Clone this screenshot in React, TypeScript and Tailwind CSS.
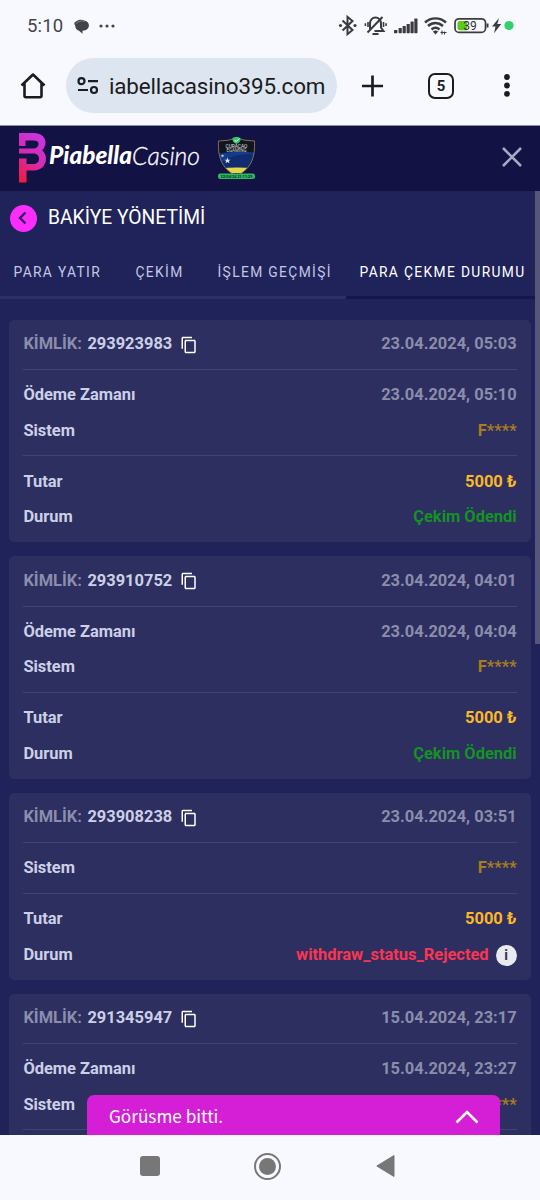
import React from 'react'
import { clsx } from 'clsx'
import { MdContentCopy } from 'react-icons/md'

type Withdrawal = {
  id: string
  date: string
  paidAt?: string
  status?: 'paid' | 'rejected'
}

const withdrawals: Withdrawal[] = [
  { id: '293923983', date: '23.04.2024, 05:03', paidAt: '23.04.2024, 05:10', status: 'paid' },
  { id: '293910752', date: '23.04.2024, 04:01', paidAt: '23.04.2024, 04:04', status: 'paid' },
  { id: '293908238', date: '23.04.2024, 03:51', status: 'rejected' },
  { id: '291345947', date: '15.04.2024, 23:17', paidAt: '15.04.2024, 23:27' },
]

function StatusIcons() {
  return (
    <svg width="180" height="30" viewBox="336 11 180 30" fill="none" stroke="#3b3b40" strokeWidth="2">
      {/* Bluetooth */}
      <path d="M342.500 20.500l10 9.500-5 4.200V16.800l5 4.200-10 9.500" />
      <circle cx="340.500" cy="25.500" r="1.600" fill="#3b3b40" stroke="none" />
      <circle cx="355" cy="25.500" r="1.600" fill="#3b3b40" stroke="none" />
      {/* Muted bell */}
      <path d="M370 30.500v-7c0-3.500 2.500-6 5.500-6s5.500 2.500 5.500 6v4l2.500 3.500h-9M367.500 32.500l15-15.500M372.500 34h6" />
      <path d="M368 22v5M365.400 23.300v2.700M383.500 22v5M386 23.300v2.700" strokeWidth="1.600" />
      {/* Signal */}
      <g fill="#3b3b40" stroke="none">
        <rect x="394" y="30" width="3.400" height="3.200" rx=".6" />
        <rect x="398.600" y="28" width="3.200" height="5.200" rx=".6" />
        <rect x="402.600" y="26" width="3.200" height="7.200" rx=".6" />
        <rect x="406.600" y="24" width="3.200" height="9.200" rx=".6" />
        <rect x="410.500" y="21.500" width="3.200" height="11.700" rx=".6" />
        <rect x="414.300" y="18.500" width="3.200" height="14.700" rx=".6" />
      </g>
      {/* Wi-Fi */}
      <path d="M425 22.500c6-5.500 15-5.500 21 0M428 26c4.500-4 10.500-4 15 0M431.500 29.500c2.500-2.200 5.500-2.200 8 0" strokeWidth="2.400" />
      <path d="M432.800 31.500l2.700-1.200 2.700 1.200-2.700 3z" fill="#3b3b40" stroke="none" />
      <path d="M442 30.500v4M444.500 31.500v3M440.500 32.500h6" strokeWidth="1.100" />
      {/* Battery */}
      <rect x="455" y="18.800" width="30.500" height="13.600" rx="4" strokeWidth="1.700" />
      <path d="M459.500 20.900h7.500v9.400h-7.500a2 2 0 0 1-2-2v-5.400a2 2 0 0 1 2-2z" fill="#5fc917" stroke="none" />
      <path d="M487.500 23.500v4" />
      <text x="463.300" y="29.900" fontSize="12" fontFamily="Roboto, sans-serif" fill="#333" stroke="none">39</text>
      <path d="M499 18l-7 8.500h3.500l-1.500 6.800 7.300-9.300h-4l1.700-6z" fill="#3b3b40" stroke="none" />
      <circle cx="509" cy="25.500" r="4.600" fill="#32d068" stroke="none" />
    </svg>
  )
}

function StatusBar() {
  return (
    <div className="flex h-[51px] items-center justify-between pl-[27px] pr-6 text-[#444448]">
      <div className="flex items-center pt-0.5">
        <span className="w-[36px] text-[18.500px] tracking-[0.2px]">5:10</span>
        <svg className="ml-[11px]" width="16" height="16" viewBox="0 0 16 16" fill="#424247">
          <path d="M2 2.500C4 .6 8 .2 11 1.700c4 1 5 5.300 2.800 7.900-1.300 1.600-3.300 2.200-5.300 2.200v3l-3.500-3C2.500 11 1 9 1.300 6.800L.4 5.200C.1 4.100.8 3 2 2.500z" />
          <path d="M1.800 4.800C4 2 8 1.300 11 2.300" stroke="#aaaab0" strokeWidth=".6" fill="none" />
        </svg>
        <svg className="-mt-[2px] ml-[8px]" width="18" height="6" viewBox="0 0 18 6" fill="#444448">
          <circle cx="3" cy="3" r="1.600" />
          <circle cx="9" cy="3" r="1.600" />
          <circle cx="15" cy="3" r="1.600" />
        </svg>
      </div>
      <StatusIcons />
    </div>
  )
}

function BrowserBar() {
  return (
    <div className="flex h-[75px] items-start border-b border-[#8990a5] pt-[7px] text-[#1b1c22]">
      <svg className="ml-5 mt-[14px]" width="26" height="28" viewBox="0 0 26 28" fill="none" stroke="currentColor" strokeWidth="2.600" strokeLinejoin="round">
        <path d="M1.500 13.500L13 2.500l11.500 11M4.500 11.500v12.300q0 1.400 1.400 1.400h14.200q1.400 0 1.400-1.400V11.500" />
      </svg>
      <div className="ml-5 flex h-[55px] w-[271px] items-center overflow-hidden rounded-full bg-[#dde5f0] pl-[11px]">
        <svg width="22" height="18" viewBox="0 0 22 18" fill="none" stroke="currentColor" strokeWidth="2.200">
          <circle cx="4.500" cy="4.200" r="3" />
          <circle cx="17" cy="13" r="3" />
          <path d="M11 4.200h10M1 13h10" />
        </svg>
        <span className="ml-[10px] whitespace-nowrap pt-[3px] text-[22.400px] tracking-[-0.130px]">iabellacasino395.com</span>
      </div>
      <svg className="ml-[24px] mt-[16px]" width="23" height="24" viewBox="0 0 24 24" stroke="currentColor" strokeWidth="2.800">
        <path d="M12 1v22M1 12h22" />
      </svg>
      <div className="ml-[44px] mt-[15px] flex h-[26px] w-[26px] items-center justify-center rounded-[7px] border-[2.500px] border-[#1b1c22] text-[15px] font-bold leading-none">
        5
      </div>
      <svg className="ml-[49px] mt-[15px]" width="8" height="26" viewBox="0 0 8 26" fill="currentColor">
        <circle cx="4" cy="4" r="2.900" />
        <circle cx="4" cy="12.500" r="2.900" />
        <circle cx="4" cy="20.800" r="2.900" />
      </svg>
    </div>
  )
}

function Logo() {
  return (
    <svg className="overflow-visible" width="190" height="52" viewBox="14 132.500 190 52">
      <defs>
        <linearGradient id="logo" x1="0.700" y1="0" x2="0.300" y2="1">
          <stop offset="0" stopColor="#c835e0" />
          <stop offset=".5" stopColor="#d52bb5" />
          <stop offset="1" stopColor="#ef1c48" />
        </linearGradient>
      </defs>
      <path
        fill="url(#logo)"
        d="M19 132.500h15c7 0 11.500 4 11.500 9.500 0 3.500-1.500 6-3.500 7.700 2.500 2 4 5 4 8.300 0 7-5 12-12 12h-7.500v12H19v-24h7.500v5.500H33c3.500 0 6-2 6-5.300s-2.500-5.200-6-5.200H19v-5h14.500c3 0 5-1.800 5-4.500s-2-3.500-5-3.500h-8v5.500H19z"
      />
      <path d="M19 154.600h14.500" stroke="#121245" strokeWidth="1.300" />
      <g fill="#fff" fontFamily="Lato, sans-serif" fontStyle="italic">
        <text x="49" y="163.500" fontSize="25" fontWeight="900" textLength="83" lengthAdjust="spacingAndGlyphs">Piabella</text>
        <text x="132" y="164" fontSize="25.500" fontWeight="300" stroke="#fff" strokeWidth=".3" textLength="68" lengthAdjust="spacingAndGlyphs">Casino</text>
      </g>
    </svg>
  )
}

function LicenseBadge() {
  return (
    <svg width="40" height="44" viewBox="217 136 40 44">
      <defs>
        <clipPath id="shield">
          <path d="M218.500 140q10 0 18-3 8 3 18 3c.6 15-2 27-18 35-16-8-18.600-20-18-35z" />
        </clipPath>
      </defs>
      <g clipPath="url(#shield)">
        <path d="M217 136h40v44h-40z" fill="#11161e" />
        <path d="M217 153q20-4 40-1v15h-40z" fill="#153b8b" />
        <path d="M217 164q20-14 40-10v13h-40z" fill="#102b70" />
        <path d="M217 168q20-3 40 0v4h-40z" fill="#e6d44b" />
      </g>
      <path d="M218.500 140q10 0 18-3 8 3 18 3c.6 15-2 27-18 35-16-8-18.600-20-18-35z" fill="none" stroke="#8b7960" strokeWidth=".9" />
      <path d="M232.500 137l4-1.500 4 1.500c.5 3-1 5-4 6-3-1-4.500-3-4-6z" fill="#31c66b" />
      <path d="M234.500 139l1.700 1.700 3-3.200" stroke="#fff" fill="none" />
      <path d="M227.500 156.500l.8 2.200h2.300l-1.800 1.400.7 2.200-2-1.300-2 1.300.7-2.200-1.800-1.400h2.300zM222.500 153l.4 1.200h1.300l-1 .8.400 1.200-1.100-.7-1.100.7.400-1.200-1-.8h1.300z" fill="#dce4f8" />
      <g fontFamily="Roboto, sans-serif" textAnchor="middle">
        <text x="236.500" y="147.200" fontSize="4.800" fill="#e0e0e0">CURAÇAO</text>
        <text x="236.500" y="151.300" fontSize="4.500" fill="#d5d5d5">EGAMING</text>
        <rect x="218" y="172.500" width="37" height="5.500" rx="2.200" fill="#2dbb62" />
        <text x="236.500" y="177" fontSize="4.300" fontWeight="700" fill="#123b2a" textLength="32">22/04/24 21:11:29</text>
      </g>
    </svg>
  )
}

function SiteHeader() {
  return (
    <header className="flex h-[65px] items-center bg-[#121245] pl-[14px]">
      <Logo />
      <div className="ml-[13px]">
        <LicenseBadge />
      </div>
      <svg className="mb-[3px] ml-auto mr-[18px]" width="20" height="20" viewBox="0 0 20 20" stroke="#a9abc6" strokeWidth="2.600">
        <path d="M1 1l18 18M19 1L1 19" />
      </svg>
    </header>
  )
}

function Tabs() {
  return (
    <nav className="flex h-[55px] whitespace-nowrap text-[13.800px] tracking-[1.360px] text-[#c4c6e4]">
      <span className="flex w-[122px] items-center border-b-[3px] border-[#2c2f62] pl-[13.500px] pt-1">PARA YATIR</span>
      <span className="flex w-[82px] items-center border-b-[3px] border-[#2c2f62] pl-[13.500px] pt-1">ÇEKİM</span>
      <span className="flex w-[142px] items-center border-b-[3px] border-[#2c2f62] pl-[13.500px] pt-1">İŞLEM GEÇMİŞİ</span>
      <span className="flex w-[194px] items-center border-b-[3px] border-[#15154a] pl-[13.500px] pt-1 text-white">PARA ÇEKME DURUMU</span>
    </nav>
  )
}

function Row({ label, className, children }: { label: string; className?: string; children: React.ReactNode }) {
  return (
    <div className="flex h-[35.500px] items-center justify-between pt-0.5">
      <span>{label}</span>
      <span className={clsx('flex items-center', className)}>{children}</span>
    </div>
  )
}

function WithdrawalCard({ item }: { item: Withdrawal }) {
  return (
    <article className="min-h-[150px] shrink-0 rounded-[5px] bg-[#2c2f60] px-[14px] text-[16.450px] font-bold text-[#cdcfe7]">
      <div className="flex h-[50.500px] items-center justify-between border-b border-[#41446f] pt-px">
        <span className="flex items-center">
          <span className="w-[64px] text-[#8b8dac]">KİMLİK:</span>
          <span className="w-[86px]">{item.id}</span>
          <MdContentCopy className="ml-[7px] h-[18px] w-[18px] text-white" />
        </span>
        <span className="text-[#8b8dac]">{item.date}</span>
      </div>
      <div className={clsx('flex flex-col justify-center border-b border-[#41446f]', item.paidAt ? 'h-[86px]' : 'h-[50.500px]')}>
        {item.paidAt && (
          <Row label="Ödeme Zamanı" className="text-[#8b8dac]">
            {item.paidAt}
          </Row>
        )}
        <Row label="Sistem" className="text-[#a87d20]">
          F****
        </Row>
      </div>
      {item.status && (
        <div className="flex h-[86px] flex-col justify-center">
          <Row label="Tutar" className="text-[#fcb827]">
            5000 ₺
          </Row>
          {item.status === 'rejected' ? (
            <Row label="Durum" className="text-[#fb3551]">
              withdraw_status_Rejected
              <span className="ml-[7px] flex h-[21px] w-[21px] items-center justify-center rounded-full bg-[#e9eaf0] text-[14px] text-[#303255]">i</span>
            </Row>
          ) : (
            <Row label="Durum" className="text-[#159224]">
              Çekim Ödendi
            </Row>
          )}
        </div>
      )}
    </article>
  )
}

function ChatBar() {
  return (
    <div className="absolute bottom-0 left-[87px] flex h-10 w-[413px] items-center justify-between rounded-t-[7px] bg-[#d51fd6] pl-[22px] pr-[21px] text-white">
      <span className="pt-0.5 font-['Noto_Sans_CJK_SC','Noto_Sans',sans-serif] text-[17.200px] leading-none">Görüsme bitti.</span>
      <svg className="mt-[3px]" width="24" height="14" viewBox="0 0 24 14" fill="none" stroke="currentColor" strokeWidth="2.600">
        <path d="M1.500 12.500L12 2l10.500 10.500" />
      </svg>
    </div>
  )
}

function NavigationBar() {
  return (
    <div className="flex h-[65px] items-center bg-[#f8f9ff] pb-[3px] pl-[140px]">
      <div className="h-5 w-5 rounded-[3px] bg-[#777]" />
      <div className="ml-[94px] flex h-[27px] w-[27px] items-center justify-center rounded-full border-2 border-[#777]">
        <div className="h-[17px] w-[17px] rounded-full bg-[#777]" />
      </div>
      <svg className="ml-[95px]" width="20" height="24" viewBox="0 0 20 24" fill="#777" stroke="#777" strokeLinejoin="round">
        <path d="M.8 12L18 1.500v21z" />
      </svg>
    </div>
  )
}

export default function App() {
  return (
    <div className="flex h-[1200px] w-[540px] flex-col overflow-hidden bg-[#f8f9ff] font-[Roboto,sans-serif]">
      <StatusBar />
      <BrowserBar />
      <main className="relative flex min-h-0 flex-1 flex-col overflow-hidden bg-[#20235a]">
        <SiteHeader />
        <div className="flex h-[53px] items-center pl-[9.500px] pt-px">
          <span className="flex h-[27px] w-[27px] items-center justify-center rounded-full bg-[#fc2cfc]">
            <svg width="10" height="14" viewBox="0 0 10 14" fill="none" stroke="#29205c" strokeWidth="2.400">
              <path d="M7.500 1.500L2 7l5.500 5.500" />
            </svg>
          </span>
          <h1 className="ml-[11.500px] text-[19.300px] text-white">BAKİYE YÖNETİMİ</h1>
        </div>
        <Tabs />
        <div className="flex min-h-0 flex-1 flex-col gap-[14px] overflow-hidden px-[9.400px] pt-[20.500px]">
          {withdrawals.map((item) => (
            <WithdrawalCard key={item.id} item={item} />
          ))}
        </div>
        <div className="absolute right-0 top-[65px] h-[453px] w-[5px] bg-[#55567a]" />
        <ChatBar />
      </main>
      <NavigationBar />
    </div>
  )
}
